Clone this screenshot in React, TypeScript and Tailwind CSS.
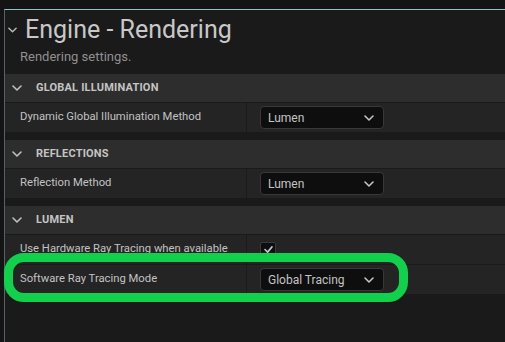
import React from "react";

// Панель настроек движка: заголовок, секции с шапками и строками свойств.
type Prop = { label: string; kind: "select" | "check"; value?: string };
type Section = { title: string; rows: Prop[] };

const SECTIONS: Section[] = [
  {
    title: "GLOBAL ILLUMINATION",
    rows: [{ label: "Dynamic Global Illumination Method", kind: "select", value: "Lumen" }],
  },
  {
    title: "REFLECTIONS",
    rows: [{ label: "Reflection Method", kind: "select", value: "Lumen" }],
  },
  {
    title: "LUMEN",
    rows: [
      { label: "Use Hardware Ray Tracing when available", kind: "check" },
      { label: "Software Ray Tracing Mode", kind: "select", value: "Global Tracing" },
    ],
  },
];

function Chevron({ className }: { className?: string }) {
  return (
    <svg viewBox="0 0 10 6" className={className} fill="none">
      <path d="M1 1l4 4 4-4" stroke="currentColor" strokeWidth="1.6" strokeLinecap="round" strokeLinejoin="round" />
    </svg>
  );
}

function Select({ value }: { value: string }) {
  return (
    <div className="flex h-[23px] w-[124px] items-center justify-between rounded-[4px] border border-[#383838] bg-[#0e0e0e] pl-[7px] pr-[9px] text-[12px] text-[#c4c4c4]">
      <span>{value}</span>
      <Chevron className="h-[6px] w-[10px] text-[#c4c4c4]" />
    </div>
  );
}

function Check() {
  return (
    <div className="flex h-[15px] w-[16px] items-center justify-center rounded-[2px] border border-[#3a3a3a] bg-[#0e0e0e]">
      <svg viewBox="0 0 10 8" className="h-[7px] w-[9px]" fill="none">
        <path d="M1 4l3 3 5-6" stroke="#b8c8d8" strokeWidth="1.8" strokeLinecap="round" strokeLinejoin="round" />
      </svg>
    </div>
  );
}

export default function App() {
  return (
    <div
      className="relative h-[342px] w-[505px] overflow-hidden bg-[#141414] pt-[9px] pl-[4px]"
      style={{ fontFamily: "Roboto, 'Noto Sans', sans-serif" }}
    >
      <div className="h-full border-t border-l border-t-[#8cc2c8] border-l-[#56626a] bg-[#1a1a1a]">
        {/* Заголовок */}
        <div className="flex items-center pt-[5px] pl-[3px]">
          <Chevron className="h-[6px] w-[9px] text-[#b8b8b8]" />
          <span className="ml-[8px] text-[25px] leading-[30px] text-[#c8c8c8]">Engine - Rendering</span>
        </div>
        <div className="mt-[4px] pl-[15px] text-[13px] leading-[16px] text-[#909090]">Rendering settings.</div>

        <div className="mt-[9px] flex flex-col gap-[8px]">
          {SECTIONS.map((s) => (
            <div key={s.title} className="flex flex-col gap-[1px]">
              <div className="flex h-[28px] items-center bg-[#2d2d2d]">
                <Chevron className="ml-[7px] h-[6px] w-[10px] text-[#c0c0c0]" />
                <span className="ml-[14px] text-[11px] font-bold tracking-[0.2px] text-[#c4c4c4]">{s.title}</span>
              </div>
              {s.rows.map((r) => (
                <div key={r.label} className="flex h-[29px] items-center bg-[#242424]">
                  <div className="flex h-full w-[242px] items-center border-r border-[#1b1b1b] pl-[15px] text-[11.25px] text-[#c2c2c2]">
                    {r.label}
                  </div>
                  <div className="ml-[13px] flex items-center">
                    {r.kind === "select" ? <Select value={r.value!} /> : <Check />}
                  </div>
                </div>
              ))}
            </div>
          ))}
        </div>
      </div>

      {/* Зелёная рамка-выделение поверх строки */}
      <div className="absolute top-[253px] left-[4px] h-[49px] w-[404px] rounded-[20px] border-[9px] border-[#11d04b]" />
    </div>
  );
}
